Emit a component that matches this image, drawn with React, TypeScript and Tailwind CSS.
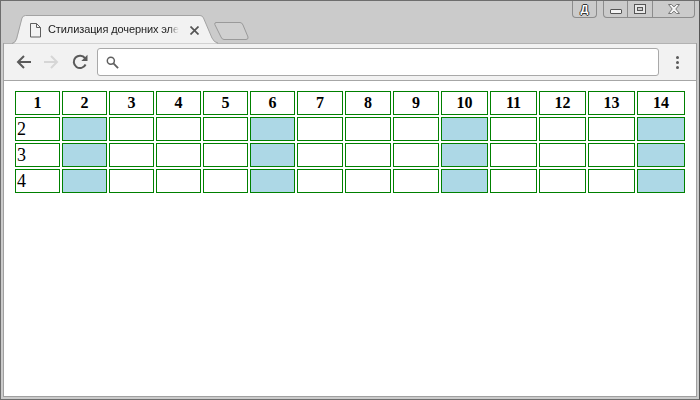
const HEADERS = [1, 2, 3, 4, 5, 6, 7, 8, 9, 10, 11, 12, 13, 14];
const ROWS = [2, 3, 4];
const BLUE_COLUMNS = [2, 6, 10, 14];

function Tab() {
  return (
    <div className="relative z-10 h-[29px] w-[200px] shrink-0">
      <svg className="absolute left-0 top-0 overflow-visible" width="208" height="29" viewBox="0 0 208 29">
        <path d="M1 28.5 Q4 27 5 24 L10 3 Q11 0.5 13.5 0.5 L188 0.5 Q190.5 0.5 191.5 3 L200 23 Q202 27 205 28.5 Z" fill="#f2f2f2" />
        <path d="M0 28.5 Q3.5 27.5 4.5 24 L10 3 Q11 0.5 13.5 0.5 L188 0.5 Q190.5 0.5 191.5 3 L200 23 Q202 27.5 206 28" fill="none" stroke="#a3a3a3" />
      </svg>
      <svg className="absolute left-[18px] top-[8px]" width="11" height="15" viewBox="0 0 11 15" fill="none" stroke="#5f5f5f">
        <path d="M0.5 0.5 H6.5 L10.5 4.5 V14 H0.5 Z M6.5 0.5 V4.5 H10.5" />
      </svg>
      <div className="absolute left-[36px] top-[7px] overflow-hidden whitespace-nowrap font-['Liberation_Sans',sans-serif] text-[11px] leading-[15px] tracking-[-0.1px] text-[#222] [mask-image:linear-gradient(to_right,black_92%,transparent)]">
        Стилизация дочерних эле
      </div>
      <svg className="absolute left-[178px] top-[11px]" width="9" height="9" viewBox="0 0 9 9" stroke="#555" strokeWidth="1.7">
        <path d="M0.5 0.5 L8.5 8.5 M8.5 0.5 L0.5 8.5" />
      </svg>
    </div>
  );
}

function WindowButtons() {
  return (
    <div className="flex items-start">
      <div className="flex h-[17px] w-[25px] items-center justify-center rounded-b-[4px] border border-t-0 border-[#8c8c8c] font-['Liberation_Sans',sans-serif] text-[11px] font-bold leading-none text-white [text-shadow:1px_0_0_#333,-1px_0_0_#333,0_1px_0_#333,0_-1px_0_#333]">
        Д
      </div>
      <div className="ml-[6px] flex h-[17px] w-[92px] rounded-b-[4px] border border-t-0 border-[#8c8c8c]">
        <div className="flex w-[24px] items-center justify-center border-r border-[#8c8c8c]">
          <div className="mt-[5px] h-[5px] w-[12px] rounded-[1px] border border-[#555] bg-[#f4f4f4]" />
        </div>
        <div className="flex w-[25px] items-center justify-center border-r border-[#8c8c8c]">
          <div className="flex h-[10px] w-[12px] items-center justify-center border border-[#555] bg-[#e8e8e8]">
            <div className="h-[4px] w-[6px] border border-[#555] bg-[#cbcbcb]" />
          </div>
        </div>
        <div className="flex flex-1 items-center justify-center">
          <svg width="12" height="10" viewBox="0 0 12 10" fill="#f4f4f4" stroke="#777">
            <path d="M0.5 0.5 H3.5 L6 2.8 L8.5 0.5 H11.5 L7.8 5 L11.5 9.5 H8.5 L6 7.2 L3.5 9.5 H0.5 L4.2 5 Z" />
          </svg>
        </div>
      </div>
    </div>
  );
}

function Toolbar() {
  return (
    <div className="flex h-[38px] shrink-0 items-center border-y border-y-[#a6a6a6] border-t-[#b2b2b2] bg-[#f2f2f2]">
      <svg className="ml-[12px]" width="15" height="14" viewBox="0 0 15 14" fill="none" stroke="#5a5a5a" strokeWidth="2">
        <path d="M15 7 H2 M8 1 L2 7 L8 13" />
      </svg>
      <svg className="ml-[13px]" width="15" height="14" viewBox="0 0 15 14" fill="none" stroke="#d6d6d6" strokeWidth="2">
        <path d="M0 7 H13 M7 1 L13 7 L7 13" />
      </svg>
      <svg className="ml-[13px]" width="16" height="16" viewBox="0 0 16 16" fill="none" stroke="#5a5a5a" strokeWidth="2">
        <path d="M13.6 10.5 A6.2 6.2 0 1 1 13 4.2" />
        <path d="M15.5 0.8 V7 H9.3 Z" fill="#5a5a5a" stroke="none" />
      </svg>
      <div className="ml-[9px] flex h-[28px] w-[562px] items-center rounded-[3px] border border-[#a9a9a9] bg-white pl-[8px]">
        <svg width="13" height="13" viewBox="0 0 14 14" fill="none" stroke="#5f5f5f" strokeWidth="1.6">
          <circle cx="5.2" cy="5.2" r="3.8" />
          <path d="M8 8 L13 13" strokeWidth="2" />
        </svg>
      </div>
      <div className="ml-[17px] flex flex-col gap-[2px]">
        <span className="h-[3px] w-[3px] rounded-full bg-[#5a5a5a]" />
        <span className="h-[3px] w-[3px] rounded-full bg-[#5a5a5a]" />
        <span className="h-[3px] w-[3px] rounded-full bg-[#5a5a5a]" />
      </div>
    </div>
  );
}

function Table() {
  return (
    <div className="grid grid-cols-[45px_45px_45px_45px_45px_45px_46px_46px_46px_47px_47px_47px_47px_48px] grid-rows-[24px_24px_24px_24px] gap-[2px] pl-[11px] pt-[10px] font-['Liberation_Serif',serif] text-black">
      {HEADERS.map((h) => (
        <div key={h} className="flex items-center justify-center border border-[#008000] text-[16px] font-bold">
          {h}
        </div>
      ))}
      {ROWS.map((r) =>
        HEADERS.map((c) => (
          <div
            key={`${r}-${c}`}
            className={`flex items-center border border-[#008000] pl-[1px] text-[18px] ${BLUE_COLUMNS.includes(c) ? "bg-[#add8e6]" : ""}`}
          >
            {c === 1 ? r : ""}
          </div>
        )),
      )}
    </div>
  );
}

export default function App() {
  return (
    <div className="flex h-[400px] w-[700px] flex-col overflow-hidden border border-[#6e6e6e] border-r-[#555] bg-[#cbcbcb] px-[2px] pb-[2px]">
      <div className="flex h-[42px] shrink-0 items-start">
        <div className="mt-[14px] flex items-start pl-[9px]">
          <Tab />
          <svg className="ml-[2px] mt-[7px]" width="35" height="18" viewBox="0 0 35 18" fill="#d0d0d0" stroke="#9a9a9a">
            <path d="M2 0.5 H26 Q28 0.5 29 3 L34 15 Q34.5 17.5 32 17.5 H10 Q8 17.5 7 15 L0.8 2.5 Q0.5 0.5 2 0.5 Z" />
          </svg>
        </div>
        <div className="ml-auto mr-[2px]">
          <WindowButtons />
        </div>
      </div>
      <div className="flex flex-1 flex-col border-x border-b border-[#a0a0a0]">
        <Toolbar />
        <div className="flex-1 bg-white">
          <Table />
        </div>
      </div>
    </div>
  );
}
